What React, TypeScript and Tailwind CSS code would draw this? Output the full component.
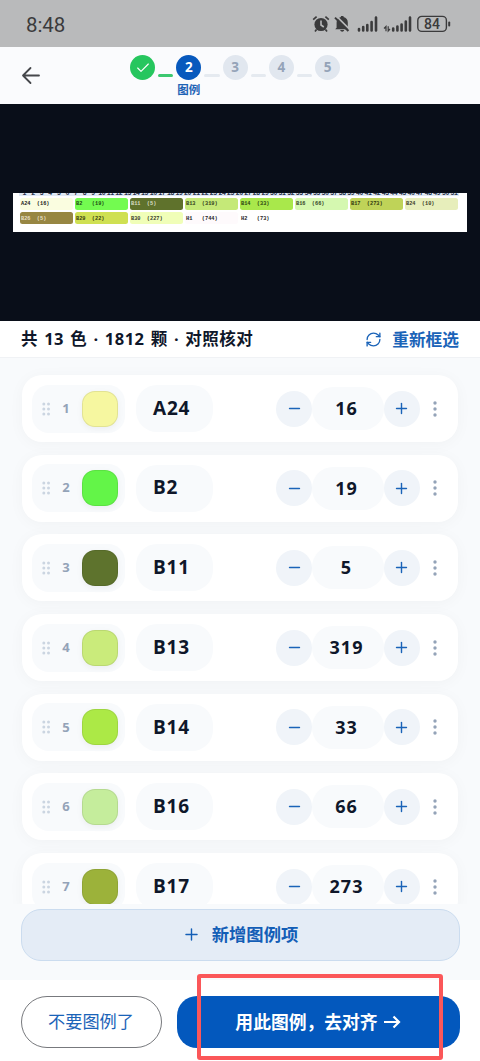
import { Check, Minus, Plus, RefreshCw } from "lucide-react";

const legend = [
  { code: "A24", count: 16, color: "#f6f7a0" },
  { code: "B2", count: 19, color: "#63f548" },
  { code: "B11", count: 5, color: "#5e732d" },
  { code: "B13", count: 319, color: "#caeb7b" },
  { code: "B14", count: 33, color: "#ace946" },
  { code: "B16", count: 66, color: "#c5ed9c" },
  { code: "B17", count: 273, color: "#9cb23a" },
];

const chips = [
  { code: "A24", count: 16, color: "#fafde0", text: "#222222" },
  { code: "B2", count: 19, color: "#73fb50", text: "#1d4a14" },
  { code: "B11", count: 5, color: "#5f722c", text: "#d5dcc0" },
  { code: "B13", count: 319, color: "#c5e978", text: "#33401c" },
  { code: "B14", count: 33, color: "#a9e84b", text: "#2b4212" },
  { code: "B16", count: 66, color: "#d5f8b0", text: "#35442a" },
  { code: "B17", count: 273, color: "#bfd358", text: "#30380f" },
  { code: "B24", count: 10, color: "#e7eebb", text: "#3c402a" },
  { code: "B26", count: 5, color: "#978642", text: "#e5dfc5" },
  { code: "B29", count: 22, color: "#cfe052", text: "#353b10" },
  { code: "B30", count: 227, color: "#f0feb8", text: "#35392a" },
  { code: "H1", count: 744, color: "#fefafc", text: "#222222" },
  { code: "H2", count: 73, color: "#ffffff", text: "#222222" },
];

function StatusBar() {
  return (
    <div className="flex h-[47px] shrink-0 items-center justify-between bg-[#b9babb] pr-[28px] pl-[26px] text-[#3b3b3c]">
      <span className="pt-[3px] font-['Roboto',sans-serif] text-[20.5px] -tracking-[0.1px]">
        8:48
      </span>
      <svg width="140" height="18" viewBox="0 0 140 18" fill="#3b3b3c">
        <circle cx="9" cy="9.5" r="6.6" />
        <path
          d="M1.2 4.6 4.6 1.6M16.8 4.6 13.4 1.6M4.5 14.5 3 16.5M13.5 14.5 15 16.5"
          stroke="#3b3b3c"
          strokeWidth="1.7"
        />
        <path d="M9 5.5V10l2.8 2" fill="none" stroke="#b9babb" strokeWidth="1.6" />
        <path d="M24.6 12.7V7.5c0-3 1.8-5 4.3-5.500V1h2.600v1c2.800.6 4.300 2.700 4.300 5.500v5.200l1.400 1.500H23.200z" />
        <path d="M28.2 15h4c-.4 2.200-3.600 2.200-4 0z" />
        <path d="M24.4 1.2 37.6 14.4" stroke="#b9babb" strokeWidth="1.7" />
        <path d="M23 2.6 36.4 16" stroke="#3b3b3c" strokeWidth="2" />
        <path
          d="M47 14v1.5M51.2 12v3.5M55.3 10v5.5M59.6 7v8.5M64 2.5v13M81.2 13.5v2M85.4 11.5v4M89.6 9.5v6M93.8 6.5v9M98 2.5v13"
          stroke="#3b3b3c"
          strokeWidth="2.6"
          strokeLinecap="round"
        />
        <path d="M72 13.5l2-2v4.8M78 14l-1.8 2v-4.8" fill="none" stroke="#3b3b3c" strokeWidth="1.2" />
        <rect x="105.8" y="1.4" width="28.6" height="15" rx="4" fill="none" stroke="#3b3b3c" strokeWidth="1.4" />
        <rect x="136.2" y="6.4" width="2" height="5" rx="1" />
        <text x="120" y="14" textAnchor="middle" fontFamily="Roboto" fontSize="14" fontWeight="500">
          84
        </text>
      </svg>
    </div>
  );
}

function Connector({ done = false }: { done?: boolean }) {
  return (
    <span
      className={`mx-[3px] mt-[19px] h-[3px] w-[15.3px] rounded-full ${
        done ? "bg-[#3cc870]" : "bg-[#e5eaf0]"
      }`}
    />
  );
}

function Header() {
  return (
    <header className="flex h-[57px] shrink-0 items-start bg-[#fafbfd] pl-[21px]">
      <svg
        className="mt-[19px]"
        width="20"
        height="19"
        viewBox="0 0 20 19"
        fill="none"
        stroke="#45474b"
        strokeWidth="1.8"
        strokeLinecap="round"
        strokeLinejoin="round"
      >
        <path d="M18 9.5H2M9.5 2 2 9.500 9.500 17" />
      </svg>
      <div className="ml-[89px] flex pt-[8px] text-[13.5px] font-bold">
        <span className="flex size-[25px] items-center justify-center rounded-full bg-[#26c65e] text-white">
          <Check size={16} strokeWidth={1.7} />
        </span>
        <Connector done />
        <div className="flex w-[25px] flex-col items-center">
          <span className="flex size-[25px] shrink-0 items-center justify-center rounded-full bg-[#0759bd] text-white">
            2
          </span>
          <span className="mt-[2px] text-[11.5px] leading-[16px] whitespace-nowrap text-[#1e63b5]">图例</span>
        </div>
        {[3, 4, 5].map((n) => (
          <div key={n} className="flex">
            <Connector />
            <span className="flex size-[25px] items-center justify-center rounded-full bg-[#e1e7ef] text-[#94a3b8]">
              {n}
            </span>
          </div>
        ))}
      </div>
    </header>
  );
}

function Preview() {
  return (
    <div className="h-[217px] shrink-0 bg-[#090e19] px-[13px] pt-[89px]">
      <div className="h-[39px] w-[454px] overflow-hidden bg-white font-['Liberation_Mono',monospace] font-bold">
        <div className="ml-[6px] flex h-[3px] w-[440px] items-end overflow-hidden bg-[#dfe8f4] pl-[1px] text-[6.5px] leading-[5px] text-[#27314a]">
          {Array.from({ length: 51 }, (_, i) => (
            <span key={i} className="w-[8.6px] shrink-0 text-center tracking-[-0.4px]">
              {i + 1}
            </span>
          ))}
        </div>
        <div className="mt-[2px] ml-[7px] grid grid-cols-8 gap-x-[2px] gap-y-[2.4px] pr-[9px]">
          {chips.map((chip) => (
            <div
              key={chip.code}
              className="flex h-[12px] items-center rounded-[2.5px] pt-[2px] pl-[1px] text-[5.3px] leading-none"
              style={{ backgroundColor: chip.color, color: chip.text }}
            >
              <span className="w-[15.8px]">{chip.code}</span>
              <span>({chip.count})</span>
            </div>
          ))}
        </div>
      </div>
    </div>
  );
}

function DragDots() {
  return (
    <svg width="9" height="14" viewBox="0 0 9 14" fill="#cbd5e1">
      {[2, 7, 12].map((y) => (
        <g key={y}>
          <circle cx="1.8" cy={y} r="1.5" />
          <circle cx="6.5" cy={y} r="1.5" />
        </g>
      ))}
    </svg>
  );
}

function LegendRow({ index, item }: { index: number; item: (typeof legend)[number] }) {
  return (
    <div className="flex h-[67px] shrink-0 items-center rounded-[20px] bg-white pl-[10px] shadow-[0_2px_16px_rgba(15,23,42,0.035)]">
      <div className="flex h-[48px] w-[93px] items-center rounded-[17px] bg-[#f8fafc] pl-[10px]">
        <DragDots />
        <span className="w-[31px] pr-px text-center text-[13px] font-bold text-[#94a3b8]">{index}</span>
        <div
          className="size-[36px] rounded-[13px] border border-black/8 shadow-[0_2px_6px_rgba(15,23,42,0.05)]"
          style={{ backgroundColor: item.color }}
        />
      </div>
      <div className="ml-[11px] flex h-[47px] w-[77px] items-center rounded-[21px] bg-[#f8fafc] pb-px pl-[17px] text-[19px] font-bold tracking-[0.8px] text-[#0f172a]">
        {item.code}
      </div>
      <div className="ml-[63px] flex items-center text-[#1a63b8]">
        <button className="flex size-[36px] items-center justify-center rounded-full bg-[#f0f4f9]">
          <Minus size={17} strokeWidth={2} />
        </button>
        <span className="flex h-[43px] w-[72px] items-center justify-center rounded-[21px] bg-[#f8fafc] pr-[3px] text-[18px] font-bold tracking-[1px] text-[#0f172a]">
          {item.count}
        </span>
        <button className="flex size-[36px] items-center justify-center rounded-full bg-[#f0f4f9] pr-px">
          <Plus size={17} strokeWidth={2} />
        </button>
      </div>
      <svg className="ml-[13px]" width="4" height="16" viewBox="0 0 4 16" fill="#94a3b8">
        <circle cx="2" cy="2" r="1.7" />
        <circle cx="2" cy="8" r="1.7" />
        <circle cx="2" cy="14" r="1.7" />
      </svg>
    </div>
  );
}

export default function App() {
  return (
    <div className="relative flex h-[1061px] w-[480px] flex-col overflow-hidden bg-[#f8fafc] font-['Open_Sans','Noto_Sans_CJK_SC',sans-serif]">
      <StatusBar />
      <Header />
      <Preview />
      <div className="flex h-[37px] shrink-0 items-center justify-between border-b border-[#f0f2f5] bg-white pt-px pr-[21px] pl-[21px]">
        <h1 className="text-[16.5px] font-bold tracking-[0.5px] whitespace-nowrap text-[#0f172a] [word-spacing:1.4px]">
          共 13 色 · 1812 颗 · 对照核对
        </h1>
        <button className="flex items-center gap-[10px] text-[16.7px] font-bold text-[#1a63b8]">
          <RefreshCw size={17} strokeWidth={1.9} />
          重新框选
        </button>
      </div>

      <div className="flex h-[546px] shrink-0 flex-col gap-[12.7px] overflow-hidden px-[22px] pt-[17px]">
        {legend.map((item, i) => (
          <LegendRow key={item.code} index={i + 1} item={item} />
        ))}
      </div>

      <div className="h-[76px] shrink-0 px-[20.5px] pt-[4.5px]">
        <button className="flex h-[52px] w-full items-center justify-center gap-[11px] rounded-[20px] border border-[#cbdcef] bg-[#e4ecf6] text-[17.3px] font-bold text-[#135eb6]">
          <Plus size={19} strokeWidth={1.8} />
          新增图例项
        </button>
      </div>

      <footer className="flex h-[81px] shrink-0 gap-[15px] bg-white px-[20.5px] pt-[16px]">
        <button className="h-[52px] w-[141px] rounded-[26px] border border-[#77797d] text-[17.2px] text-[#1a63b8]">
          不要图例了
        </button>
        <button className="flex h-[52px] flex-1 items-center justify-center rounded-[20px] bg-[#0358bd] text-[17.8px] font-bold text-white">
          用此图例，去对齐
          <svg
            className="ml-[6px]"
            width="17"
            height="14"
            viewBox="0 0 17 14"
            fill="none"
            stroke="currentColor"
            strokeWidth="2.2"
          >
            <path d="M0 7h15M9.5 1.5 15 7l-5.5 5.5" />
          </svg>
        </button>
      </footer>

      <div className="pointer-events-none absolute top-[974px] left-[197px] h-[86px] w-[246px] rounded-[3px] border-[4.5px] border-[#fb5759]" />
    </div>
  );
}
